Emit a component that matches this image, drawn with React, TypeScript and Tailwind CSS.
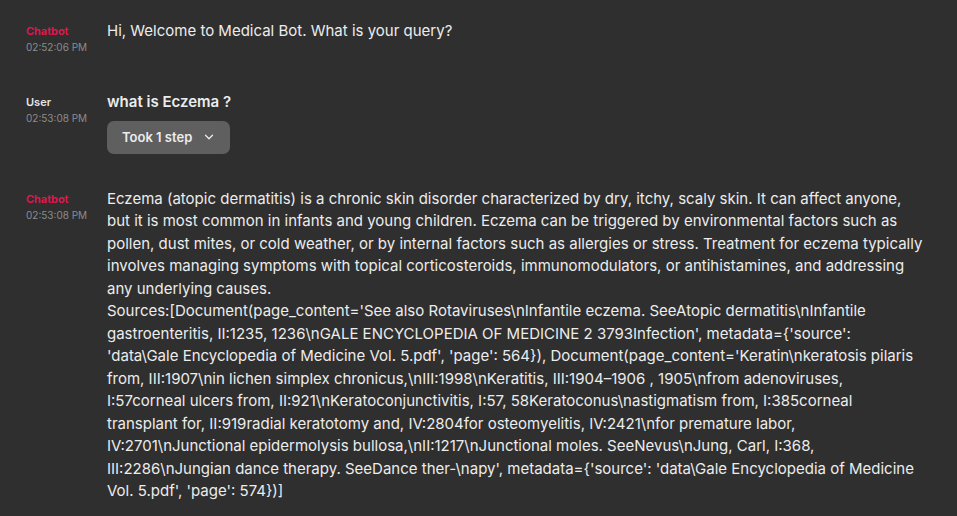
import { ChevronDown } from "lucide-react";

interface MessageProps {
  author: "Chatbot" | "User";
  time: string;
  children: React.ReactNode;
}

function Message({ author, time, children }: MessageProps) {
  return (
    <div className="flex">
      <div className="w-[81px] shrink-0 pt-[4px]">
        <div
          className={
            author === "Chatbot"
              ? "text-[11px] font-semibold leading-[14px] text-[#e8154f]"
              : "text-[11px] font-semibold leading-[14px] text-[#e6e6e6]"
          }
        >
          {author}
        </div>
        <div className="mt-[3px] text-[10px] leading-[12px] text-[#8c8c8c]">{time}</div>
      </div>
      <div className="min-w-0 flex-1">{children}</div>
    </div>
  );
}

const answer =
  "Eczema (atopic dermatitis) is a chronic skin disorder characterized by dry, itchy, scaly skin. It can affect anyone, but it is most common in infants and young children. Eczema can be triggered by environmental factors such as pollen, dust mites, or cold weather, or by internal factors such as allergies or stress. Treatment for eczema typically involves managing symptoms with topical corticosteroids, immunomodulators, or antihistamines, and addressing any underlying causes.";

const sources =
  "Sources:[Document(page_content='See also Rotaviruses\\nInfantile eczema. SeeAtopic dermatitis\\nInfantile gastroenteritis, II:1235, 1236\\nGALE ENCYCLOPEDIA OF MEDICINE 2 3793Infection', metadata={'source': 'data\\Gale Encyclopedia of Medicine Vol. 5.pdf', 'page': 564}), Document(page_content='Keratin\\nkeratosis pilaris from, III:1907\\nin lichen simplex chronicus,\\nIII:1998\\nKeratitis, III:1904–1906 , 1905\\nfrom adenoviruses, I:57corneal ulcers from, II:921\\nKeratoconjunctivitis, I:57, 58Keratoconus\\nastigmatism from, I:385corneal transplant for, II:919radial keratotomy and, IV:2804for osteomyelitis, IV:2421\\nfor premature labor, IV:2701\\nJunctional epidermolysis bullosa,\\nII:1217\\nJunctional moles. SeeNevus\\nJung, Carl, I:368, III:2286\\nJungian dance therapy. SeeDance ther-\\napy', metadata={'source': 'data\\Gale Encyclopedia of Medicine Vol. 5.pdf', 'page': 574})]";

export default function App() {
  return (
    <div className="h-[516px] w-full overflow-hidden bg-[#2f2f2f] pl-[26px] pt-[20px] font-['Inter',sans-serif] text-[15px] leading-[22.5px] text-[#ececec]">
      <div className="flex w-[899px] flex-col">
        <Message author="Chatbot" time="02:52:06 PM">
          <p>Hi, Welcome to Medical Bot. What is your query?</p>
        </Message>

        <div className="mt-[38px]">
          <Message author="User" time="02:53:08 PM">
            <p className="font-semibold">what is Eczema ?</p>
            <button className="mt-[7px] flex h-[33px] items-center gap-[10px] rounded-[7px] bg-[#5f5f5f] pl-[15px] pr-[14px] text-[13px] font-semibold text-[#ececec]">
              Took 1 step
              <ChevronDown size={14} strokeWidth={2.2} />
            </button>
          </Message>
        </div>

        <div className="mt-[34px]">
          <Message author="Chatbot" time="02:53:08 PM">
            <p>{answer}</p>
            <p>{sources}</p>
          </Message>
        </div>
      </div>
    </div>
  );
}
